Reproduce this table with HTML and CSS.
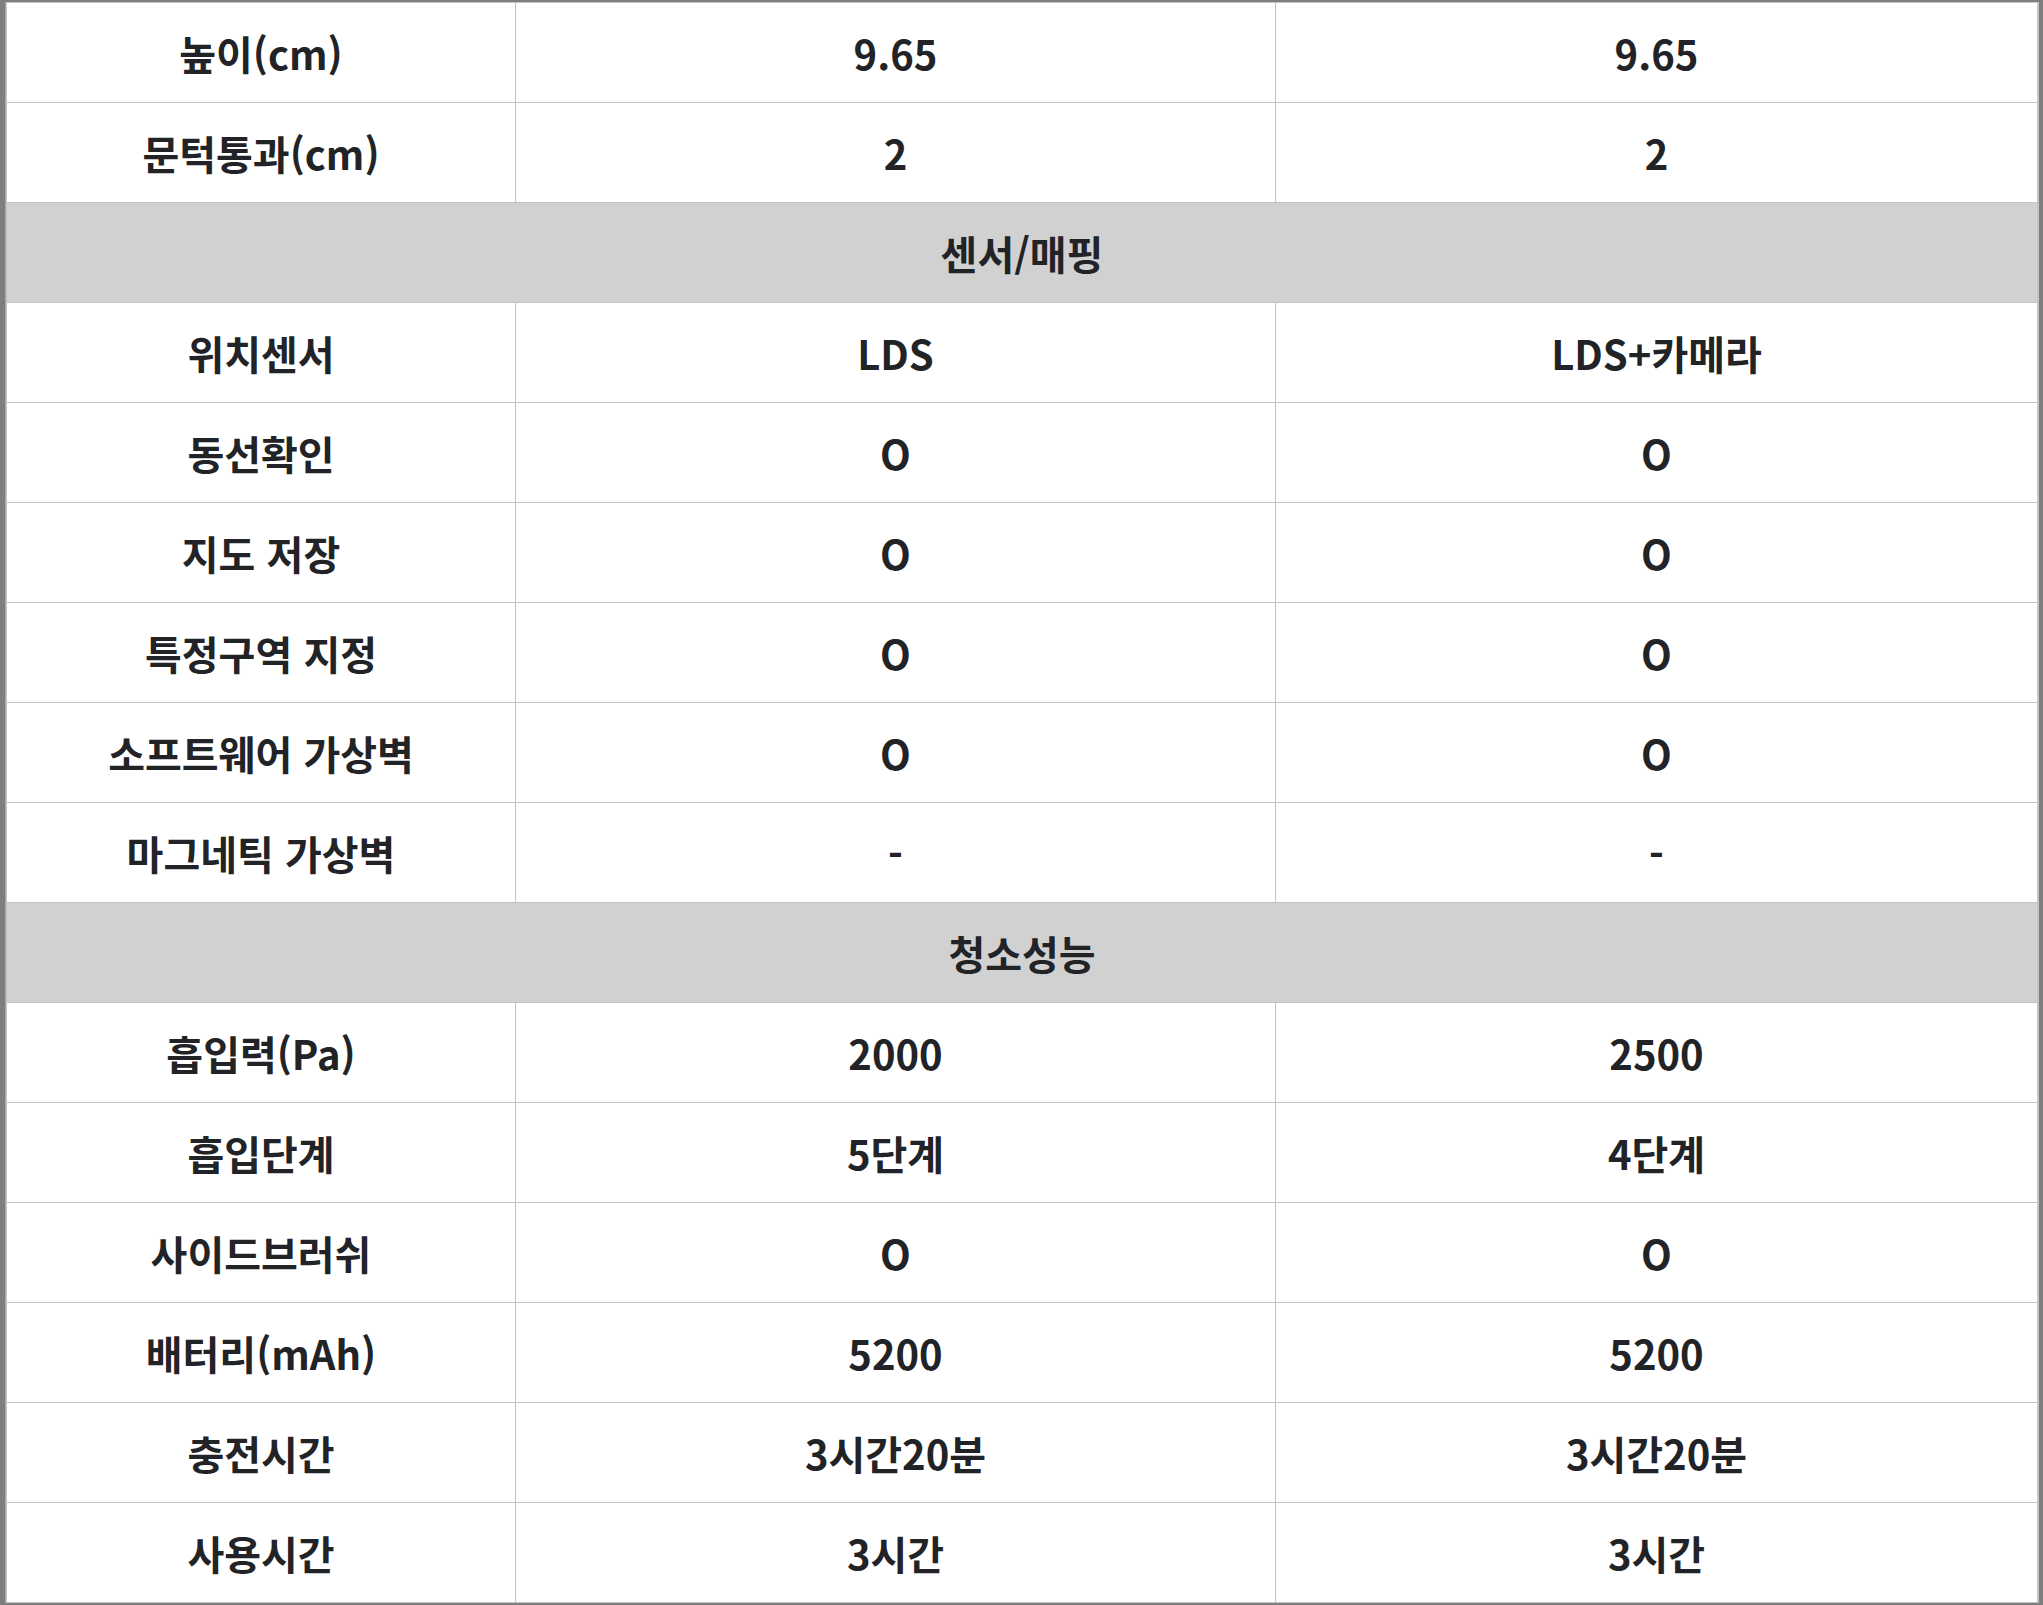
FILE: index.html
```html
<!DOCTYPE html>
<html lang="ko">
<head>
<meta charset="utf-8">
<link rel="stylesheet" href="styles.css">
</head>
<body>
<div class="sheet">
<table class="spec">
<colgroup><col class="c1"><col class="c2"><col class="c3"></colgroup>
<tbody>
<tr><td>높이(cm)</td><td>9.65</td><td>9.65</td></tr>
<tr><td>문턱통과(cm)</td><td>2</td><td>2</td></tr>
<tr class="group"><td colspan="3">센서/매핑</td></tr>
<tr><td>위치센서</td><td>LDS</td><td>LDS+카메라</td></tr>
<tr><td>동선확인</td><td>O</td><td>O</td></tr>
<tr><td>지도 저장</td><td>O</td><td>O</td></tr>
<tr><td>특정구역 지정</td><td>O</td><td>O</td></tr>
<tr><td>소프트웨어 가상벽</td><td>O</td><td>O</td></tr>
<tr><td>마그네틱 가상벽</td><td>-</td><td>-</td></tr>
<tr class="group"><td colspan="3">청소성능</td></tr>
<tr><td>흡입력(Pa)</td><td>2000</td><td>2500</td></tr>
<tr><td>흡입단계</td><td>5단계</td><td>4단계</td></tr>
<tr><td>사이드브러쉬</td><td>O</td><td>O</td></tr>
<tr><td>배터리(mAh)</td><td>5200</td><td>5200</td></tr>
<tr><td>충전시간</td><td>3시간20분</td><td>3시간20분</td></tr>
<tr><td>사용시간</td><td>3시간</td><td>3시간</td></tr>
</tbody>
</table>
</div>
</body>
</html>
```
FILE: styles.css
```css
html, body {
  margin: 0;
  padding: 0;
  background: #7e7e7e;
  overflow: hidden;
}
.sheet {
  margin: 2px 0 0 5px;
  width: 2031px;
  border-left: 1px solid #a9a9a9;
  border-right: 2px solid #c6c6c6;
  background: #ffffff;
}
.spec {
  width: 2031px;
  table-layout: fixed;
  border-collapse: collapse;
  font-family: "Noto Sans CJK KR", "Noto Sans", sans-serif;
  font-weight: 700;
  font-size: 40px;
  color: #222326;
}
.c1 { width: 509px; }
.c2 { width: 760px; }
.c3 { width: 762px; }
.spec td {
  border: 1px solid #c3c3c3;
  height: 100px;
  padding: 0;
  box-sizing: border-box;
  text-align: center;
  vertical-align: middle;
  line-height: 1;
}
.spec .group td {
  background: #d1d1d1;
}
```
